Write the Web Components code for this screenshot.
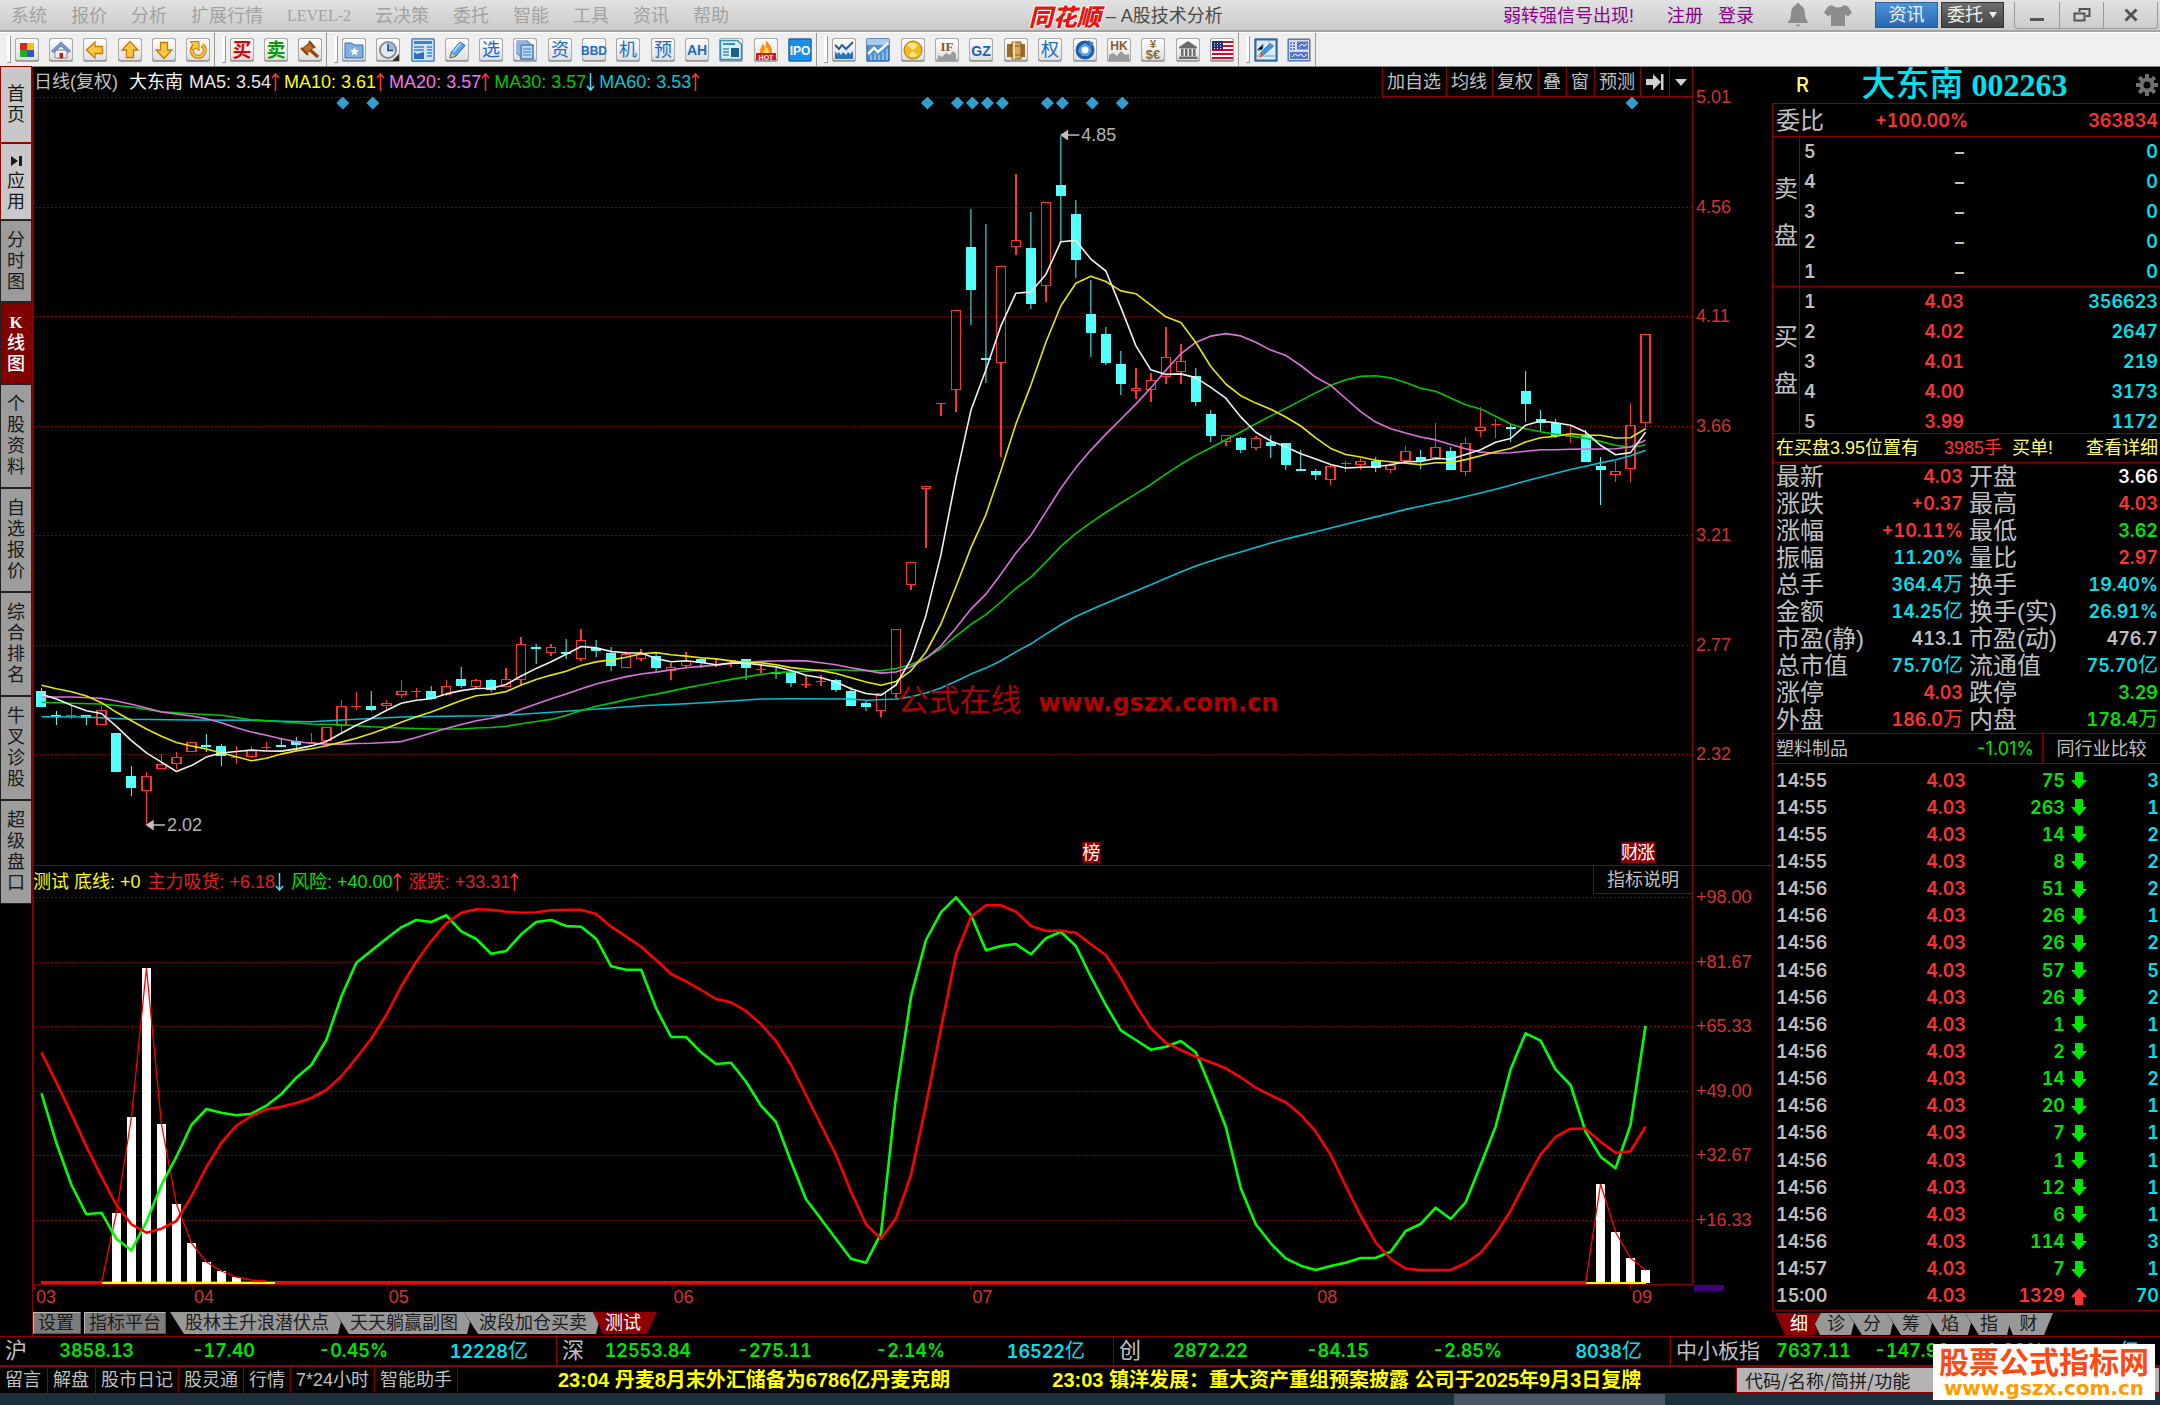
<!DOCTYPE html>
<html lang="zh-CN">
<head>
<meta charset="utf-8">
<title>A股技术分析</title>
<style>
  :root{
    --ui:"Liberation Sans","Noto Sans CJK SC",sans-serif;
    --num:Inter,"Noto Sans CJK SC",sans-serif;
    --line:#8c0000; --gray:#c0c0c0; --red:#ff3232; --green:#00e600; --cyan:#00e1f0; --yellow:#ffff00;
  }
  body{margin:0;background:#000;color:var(--gray);font:18px/24px var(--ui)}
</style>
</head>
<body>
<stock-app></stock-app>
<script>
const COMMON = `
  *{box-sizing:border-box}
  :host{display:block}
  button,a,input{font:inherit;color:inherit;text-decoration:none;border:0;padding:0;margin:0;background:none;border-radius:0;white-space:nowrap}
  .r{color:var(--red)} .g{color:var(--green)} .c{color:var(--cyan)} .w{color:#fff} .s{color:var(--gray)}
`;
class Base extends HTMLElement{
  constructor(){
    super();
    this.attachShadow({mode:'open'}).innerHTML = `<style>${COMMON}${this.css()}</style>${this.html()}`;
  }
  css(){return ''}
  html(){return '<slot></slot>'}
}
const def = (name, css, html) => customElements.define(name, class extends Base{
  css(){return css} html(){return typeof html === 'function' ? html() : html}
});

/* ---------- title bar ---------- */
def('title-bar', `
  :host{display:flex;align-items:center;height:32px;background:linear-gradient(#e2e2e2,#cbcbcb);border-bottom:2px solid #a4a4a4;color:#a2a2a2}
  nav{display:flex;gap:24px;padding:2px 0 0 11px;flex:1.086 1 0}
  .lv{font-family:"Liberation Serif",serif;font-size:16px}
  h1{margin:0;padding-top:2px;font:inherit;display:flex;align-items:center;gap:5px;color:#4a4a4a}
  h1 b{font:italic 900 24px/28px "Noto Sans CJK SC",sans-serif;color:#e01818;text-shadow:1px 0 #fff,-1px 0 #fff,0 1px #fff,0 -1px #fff}
  .right{flex:1 1 0;display:flex;justify-content:flex-end;align-items:center;color:#8b008b}
  .right>a{margin:2px 15px 0 0}
  .right>a.hot{margin-right:33px}
  .right>svg{margin:0 2px 0 11px}
  .right>a+svg{margin-left:17px}
  .b{height:26px;width:63px;color:#eee;margin-left:3px;border:1px solid #2d5f94;background:linear-gradient(#4a94da,#2868ae)}
  .b.k{background:linear-gradient(#6e6e6e,#444);border-color:#333}
  .win{display:flex;margin:0 2px 0 10px;border:1px solid #999;border-top:0;border-radius:0 0 4px 4px}
  .win button{width:44px;height:26px;display:grid;place-items:center;border-left:1px solid #999}
  .win button:first-child{border-left:0}.win button:last-child{width:54px}
`, `
  <nav>${['系统','报价','分析','扩展行情'].map(t=>`<button>${t}</button>`).join('')}<button class="lv">LEVEL-2</button>${['云决策','委托','智能','工具','资讯','帮助'].map(t=>`<button>${t}</button>`).join('')}</nav>
  <h1><b>同花顺</b><span>–</span><span>A股技术分析</span></h1>
  <div class="right">
    <a class="hot" href="#">弱转强信号出现!</a><a href="#">注册</a><a href="#">登录</a>
    <svg width="24" height="26" viewBox="0 0 24 26"><path d="M12 1c1.4 0 2 1 2 2 3.500 1.300 4.800 4.600 5 9 .1 4 1.500 6.500 3.500 9h-21C3.500 18.500 4.900 16 5 12c.2-4.400 1.500-7.700 5-9 0-1 .6-2 2-2zM9.500 22.500h5L12 25z" fill="#8c8c8c"/></svg>
    <svg width="30" height="26" viewBox="0 0 30 26"><path d="M9 3c2 3.200 10 3.200 12 0l4 1.500 4 6-4 4-3-2V24H8V12.500l-3 2-4-4 4-6z" fill="#8c8c8c"/></svg>
    <button class="b" style="margin-left:20px">资讯</button>
    <button class="b k">委托 <svg width="10" height="12" viewBox="0 0 10 12"><path d="M1 3h8L5 9z" fill="#eee"/></svg></button>
    <div class="win">
      <button aria-label="最小化"><svg width="16" height="16"><path d="M1 11h14v3H1z" fill="#555"/></svg></button>
      <button aria-label="还原"><svg width="18" height="16"><path d="M6.500 5V2h10v7H13M1.500 6.500h10v7h-10z" fill="none" stroke="#555" stroke-width="2"/></svg></button>
      <button aria-label="关闭"><svg width="16" height="14"><path d="M2.500 1.500l11 11M13.500 1.500l-11 11" stroke="#555" stroke-width="3"/></svg></button>
    </div>
  </div>`);

/* ---------- toolbar ---------- */
const T = (t,size,fill,y=17,font='Noto Sans CJK SC',w=400) =>
  `<text x="12" y="${y}" text-anchor="middle" font-family="${font},sans-serif" font-size="${size}" font-weight="${w}" fill="${fill}">${t}</text>`;
const ar = rot => `<path transform="rotate(${rot} 12 12)" d="M3.500 12L12 4V8.500h7.500v7H12V20z" fill="#ffc83c" stroke="#c47a10" stroke-width="1.300"/>`;
const N = 'Liberation Sans Narrow';
const ICONS = {
  grid:`<path d="M5 5h7v7H5z" fill="#d22"/><path d="M12 5h7v7h-7z" fill="#e8c800"/><path d="M5 12h7v7H5z" fill="#2a2"/><path d="M12 12h7v7h-7z" fill="#35c"/>`,
  home:`<path d="M6 12h12v8H6z" fill="#eee" stroke="#888"/><path d="M2.500 13L12 4l9.500 9-2 1.500L12 8l-7.500 6.500z" fill="#7d9ad8" stroke="#3c5a98" stroke-width=".7"/><path d="M10.500 15h3.500v5.500h-3.500z" fill="#b22"/>`,
  left:ar(0), up:ar(90), down:ar(-90),
  undo:`<path d="M7 8.500a6.500 6.500 0 1 0 9-1.500" fill="none" stroke="#c47a10" stroke-width="4"/><path d="M7 8.500a6.500 6.500 0 1 0 9-1.500" fill="none" stroke="#ffc83c" stroke-width="2"/><path d="M4 3.500h9V13l-3-3-3 2-2-2 2-3z" fill="#ffc83c" stroke="#c47a10"/>`,
  buy:T('买',19,'#e00000',19,'Noto Sans CJK SC',700), sell:T('卖',19,'#0a9a0a',19,'Noto Sans CJK SC',700),
  hammer:`<path d="M11 11l9 8" stroke="#9a4a10" stroke-width="3.500"/><path d="M4 11l8-7 4 5-8 7z" fill="#c06c28" stroke="#7c3a0c"/><path d="M3 10l7 7M11 3l6 7" stroke="#8a4410" stroke-width="2"/>`,
  star:`<path d="M3 5h7l2 2h9v13H3z" fill="#7fb0e4" stroke="#3a70b4"/><path d="M12.500 9l1.300 3 3.200.2-2.500 2 .9 3.300-2.900-1.800-2.900 1.800.9-3.300-2.500-2 3.200-.2z" fill="#fff"/>`,
  clock:`<circle cx="12" cy="12" r="8" fill="#dfe9f6" stroke="#8a8a8a" stroke-width="2"/><path d="M12 4.500v8h6.500A7 7 0 0 0 12 4.500z" fill="#9db6e8"/><path d="M12 6v6.500h5" stroke="#246" fill="none" stroke-width="1.500"/><path d="M23 16v7h-7z" fill="#333"/>`,
  panel:`<path d="M1 1h22v22H1z" fill="#cfe2f8" stroke="#2f6fb8"/><path d="M3 3h18v3H3z" fill="#3b82d0"/><path d="M3 9h10M3 12h10M16 9h5M16 12h5M16 15h5M16 18h5" stroke="#3b82d0" stroke-width="1.500"/><path d="M3 21v-7l3 2 3-1 4-1v7z" fill="#2c6fc0"/>`,
  pen:`<path d="M5 20l1.500-6L15 4l5 3.500L11 18z" fill="#58a8ea" stroke="#1c62a8"/><path d="M8 14l8-9" stroke="#bfe0ff" stroke-width="1.500"/><path d="M5 20l1.500-5.500L11 18z" fill="#f0c080" stroke="#555" stroke-width=".6"/>`,
  xuan:T('选',18,'#1d6bc4',18), zi:T('资',18,'#1d6bc4',18), ji:T('机',18,'#1d6bc4',18), yu:T('预',18,'#1d6bc4',18), quan:T('权',18,'#1d6bc4',18),
  docs:`<path d="M4 3h11v13H4z" fill="#eaf2fc" stroke="#3f78bc"/><path d="M6 5h11v13H6z" fill="#eaf2fc" stroke="#3f78bc"/><path d="M8 7h12v14H8z" fill="#bcd6f4" stroke="#3f78bc" stroke-width="1.500"/><path d="M10 11h8M10 14h8M10 17h8" stroke="#3f78bc"/>`,
  bbd:T('BBD',12,'#1d6bc4',16.5,N,700), ah:T('AH',14,'#1d6bc4',17,N,700),
  sheet:`<path d="M1.500 2.500h17l4 4v15h-21z" fill="#d9effa" stroke="#3a90b8" stroke-width="1.500"/><path d="M4 6h12" stroke="#3a90b8" stroke-width="2"/><path d="M4 11h6M4 14h6M4 17h6" stroke="#3a90b8" stroke-width="1.500"/><path d="M12 10h8v9h-8z" fill="#1e5f8c"/>`,
  hot:`<path d="M12 1c1 4 6 6 6 12v3H6v-3c0-3 2-4 2-7 2 1 2.500 2 2.500 3.500C12 7 12.500 4 12 1z" fill="#ff8c1a"/><path d="M12 8c.5 2 3 3 3 7H9c0-3 2.500-4 3-7z" fill="#ffe04a"/><path d="M2 15h20v7H2z" fill="#d81818"/>${T('HOT',7,'#fff',21.5,'Liberation Sans',700)}`,
  ipo:`<path d="M1 1h22v22H1z" fill="#1d8fe8" stroke="#0e5ca6"/>${T('IPO',12,'#fff',16.5,N,700)}`,
  wave:`<path d="M3 7l4 4 3-4 4 4 3-3 4-4" fill="none" stroke="#1f5f9e" stroke-width="2"/><path d="M3 21v-8l2 3 2-2 2 3 2-3 3 3 2-3 2 2 3-3v8z" fill="#2d74ba"/>`,
  trend:`<path d="M1 1h22v22H1z" fill="#4f8fd4" stroke="#3468a4"/><path d="M1 1h22v6H1z" fill="#a8cbf0"/><path d="M2 16l6-6 4 4 10-9" fill="none" stroke="#fff" stroke-width="2.500"/><path d="M5 22v-5M9 22v-7M13 22v-5M17 22v-8M21 22v-11" stroke="#cfe2f8"/>`,
  coin:`<circle cx="12" cy="12" r="9" fill="#f0b820" stroke="#a87810"/><path d="M6 7a9 9 0 0 1 11 0l-5 5zM17 17a9 9 0 0 1-9 1l3-5z" fill="#ffe88a"/>`,
  ifx:`<path d="M3 23v-6l4 2 4-4 4 2 3-4 3 3v7z" fill="#9c9c9c"/>${T('IF',13,'#8a5a30',12.5,'Liberation Serif',700)}`,
  gz:T('GZ',14,'#1a5fc0',17.5,'Liberation Sans',700),
  barrel:`<path d="M3 6h6v13H3zM15 6h6v13h-6z" fill="#9a6a2c"/><path d="M8 4h9v17H8z" fill="#d8aa58" stroke="#8a5c20"/><path d="M8 8h9M8 17h9" stroke="#8a5c20"/><path d="M10 4v17" stroke="#f5dca0" stroke-width="2"/>`,
  disc:`<circle cx="12" cy="12" r="9.500" fill="#1c5ea8"/><path d="M12 5l5 3.500 2 5-4 4.500H9l-4-4.500 2-5z" fill="#57a0e4"/><circle cx="12" cy="12" r="3.500" fill="#fff"/><path d="M15 2l6 3-4 4z" fill="#3a86d4"/>`,
  hk:`<path d="M2 23v-6l4-2 4 3 4-5 4 4 4-1v7z" fill="#9c9c9c"/>${T('HK',12,'#8a5a30',12,N,700)}`,
  money:T('¥',11,'#8a6a40',10,'Liberation Sans',700)+T('$€',13,'#8a6a40',21,'Liberation Sans',700),
  bank:`<path d="M12 3l9 6v1.500H3V9z" fill="#6c6c6c"/><path d="M5 11h2.500v7H5zM9 11h2.500v7H9zM13 11h2.500v7H13zM17 11h2.500v7H17zM3 18.500h18.500V21H3z" fill="#6c6c6c"/>`,
  us:`<path d="M2 3h21v18H2z" fill="#fff"/><path d="M2 4h21M2 8h21M2 12h21M2 16h21M2 20h21" stroke="#c8102e" stroke-width="2.200"/><path d="M2 3h11v9H2z" fill="#1e2f78"/><path d="M4 5.500h8M4 8h8M4 10.500h8" stroke="#fff" stroke-dasharray="1 2"/>`,
  edit:`<path d="M1.500 1.500h21v21h-21z" fill="#dcebfa" stroke="#3468a4" stroke-width="2"/><path d="M3 12h6V6M3 18h18M15 3v4" stroke="#5a92d4"/><path d="M5 20l1-6L16 4l5 4L10 18z" fill="#4a94dc" stroke="#fff"/><path d="M5 20l1-6 4 4z" fill="#e06a3a"/>`,
  table:`<path d="M1.500 1.500h21v21h-21z" fill="#d3def6" stroke="#5a78c8"/><path d="M3 5h5M3 8h5M3 11h5" stroke="#4a68c0" stroke-width="1.500" stroke-dasharray="2 1"/><path d="M10 3.500h11v8H10zM3 14h18v7H3z" fill="#5878d0"/><path d="M12 9l3-3 2 2 3-2M5 19l3-3 3 2 3-2 3 3 3-3" fill="none" stroke="#fff"/>`
};
const GROUPS = [
  [215,['grid','home','left','up','down','undo']],
  [112,['buy','sell','hammer']],
  [490,['star','clock','panel','pen','xuan','docs','zi','bbd','ji','yu','ah','sheet','hot','ipo']],
  [422,['wave','trend','coin','ifx','gz','barrel','quan','disc','hk','money','bank','us']],
  [77,['edit','table']]
];
def('tool-bar', `
  :host{display:flex;height:35px;background:#efefef;border-top:1px solid #fff;border-bottom:1px solid #888}
  .grp{display:flex;justify-content:space-between;align-items:center;padding:0 4px 0 15px;border-right:1px solid #999;position:relative}
  .grp::before{content:"";position:absolute;left:7px;top:3px;bottom:3px;width:3px;border-right:1px solid #999;border-bottom:1px solid #999;background:#fff}
  button{width:24px;height:24px;border-radius:3px;background:linear-gradient(#fff,#dcdcdc);box-shadow:inset 0 0 0 1px #aaa,inset 0 -1px 0 1px #999}
  svg{display:block;overflow:visible}
`, GROUPS.map(([w,l])=>`<div class="grp" style="width:${w}px">${l.map(k=>`<button aria-label="${k}"><svg width="24" height="24" viewBox="0 0 24 24">${ICONS[k]}</svg></button>`).join('')}</div>`).join(''));

/* ---------- side navigation ---------- */
def('side-nav', `
  :host{width:33px;flex:none;border-right:1px solid var(--line)}
  nav{display:flex;flex-direction:column;padding-left:1px;gap:2px}
  button{width:30px;height:102px;display:flex;flex-direction:column;justify-content:center;align-items:center;background:#9c9c9c;color:#1a1a1a;line-height:21px;outline:1px solid #222}
  .t{height:80px}
  .top{height:75px;background:#c8c8c8;outline:1px solid #900}
  .on{background:#800000;color:#fff;font-weight:500}
  .on i{font:700 17px/21px "Liberation Serif",serif}
  span{display:block}
`, () => `<nav>${[['top','首页'],['top','▸应用'],['t','分时图'],['t on','K线图'],['','个股资料'],['','自选报价'],['','综合排名'],['','牛叉诊股'],['','超级盘口']]
  .map(([c,t])=>`<button class="${c}">${[...t].map(x=>x==='▸'?'<svg width="14" height="20"><path d="M2 5l7 5-7 5zM10 5h3v10h-3z" fill="#1a1a1a"/></svg>':x==='K'?'<i>K</i>':`<span>${x}</span>`).join('')}</button>`).join('')}</nav>`);

/* ---------- chart data ---------- */
const X = i => 41.5 + 15*i;
// [colour, high, low, body top, body bottom]; two vertical scales
const A = y => 560 + y/3, B = y => 100 + y/2.529;
const D1 = `c384,442,392,441 c452,495,465,470 r437,477,466,468 c465,495,465,474 r437,495,451,494 c518,635,518,635 c617,707,649,684 r635,795,649,692 r582,627,613,626 r576,626,591,611 r547,575,547,575 c522,577,554,557 c553,617,559,587 r559,612,591,594 r558,593,569,590 r545,573,561,567 c533,558,554,558 c532,571,544,554 r518,553,547,549 r502,560,502,543 r419,521,438,498 r397,450,438,440 c392,452,437,451 r419,451,428,437 r360,414,393,404 r383,414,393,395 c378,416,392,416 r361,409,379,405 c320,383,356,378 r356,386,361,382 c356,395,360,391 r325,380,357,380 r230,374,253,360 c253,311,261,264 r253,287,262,278 c238,297,276,279 r208,302,240,297 c239,290,264,273 c262,333,278,318 r277,324,283,323 r266,302,281,297 c280,333,289,324 r308,360,321,332 r277,321,302,318 c290,324,297,309 r297,321,315,317 r300,320,300,303 c298,360,298,324 r316,338,326,332 c323,356,335,339 c336,382,337,369 r345,383,371,373 r345,378,362,367 c356,395,360,391 c380,437,392,437 c421,452,429,441 r398,472,398,454 r208,414,208,403 r7,90,7,76`;
const D2 = `r975,1133,975,983 r767,798,767,768 r532,788,532,733 c276,568,371,480 c314,716,652,657 r421,902,421,664 r188,393,353,373 c283,529,375,516 r258,511,258,471 c90,360,216,244 c253,450,288,404 c454,651,542,590 c573,669,591,666 c636,745,667,718 r679,756,728,737 r690,765,709,734 r573,718,649,700 r617,718,660,687 c679,775,697,764 c785,864,795,851 r847,875,847,865 c853,893,856,885 r850,886,854,881 c847,905,864,875 c868,936,868,924 c886,935,932,936 c933,962,937,949 r922,974,925,962 r913,942,919,921 r906,935,914,923 c902,942,912,930 r917,943,924,935 r876,916,888,914 c886,932,903,914 r818,905,877,905 c877,936,888,936 r853,950,868,942 r776,852,828,836 r806,856,819,823 c820,866,826,829 c685,814,735,768 c785,838,808,816 c808,854,817,850 r822,867,849,852 c835,916,849,916 c902,1023,926,935 r913,966,937,949 r766,966,821,934 r592,835,592,817`;
const parse = (s,f) => s.split(' ').map(t=>[t[0],...t.slice(1).split(',').map(v=>f(+v))]);
const K = [...parse(D1,A),...parse(D2,B)];
const close = K.map(k => k[0]==='c' ? k[4] : k[3]);
const SEED = {
  5:[[0,403],[1,417],[2,436],[3,452]],
  10:[[0,376],[1,386],[2,395],[3,408],[4,428],[5,457],[6,482],[7,507],[8,529]],
  20:[[0,411],[2,411],[4,415],[5,423],[6,433],[7,444],[8,456],[10,468],[11,476],[12,488],[13,503],[14,516],[15,526],[16,536],[17,545],[18,550]],
  30:[[0,427],[2,430],[4,432],[6,441],[8,455],[10,461],[12,466],[14,479],[16,485],[18,492],[20,494],[22,500],[24,504],[26,507],[28,507]],
  60:[[0,470],[3,471],[6,478],[10,480],[14,481],[16,484],[18,485],[20,480],[24,471],[28,468],[30,467],[32,463],[35,454],[38,444],[40,437],[43,431],[46,423],[48,417],[50,416],[54,417],[55,421],[57,417],[58,410]]
};
const ma = n => {
  const p = SEED[n].map(([i,y])=>[X(i),A(y)]);
  for(let i=n-1;i<close.length;i++) p.push([X(i), close.slice(i-n+1,i+1).reduce((a,b)=>a+b)/n]);
  return p.map(q=>q[0]+','+q[1].toFixed(1)).join(' ');
};
const candle = ([c,h,l,t,b],i) => {
  const x = X(i); [h,l,t,b] = [h,l,t,b].map(Math.round);
  if(c==='c') return `<path d="M${x} ${h}V${l}" stroke="#54ffff" stroke-width="1"/><path d="M${x-5} ${t}h10v${Math.max(2,b-t)}h-10z" fill="#54ffff"/>`;
  if(b-t<3) return `<path d="M${x} ${h}V${l}M${x-5} ${t+.5}h10" stroke="#ff3232" stroke-width="1.500"/>`;
  return `<path d="M${x} ${h}V${t}M${x} ${b}V${l}M${x-4.5} ${t+.5}h9v${b-t-1}h-9z" fill="none" stroke="#ff3232" stroke-width="1.500"/>`;
};
const gridLines = (y0,step,n) => Array.from({length:n},(_,k)=>`<path d="M35 ${Math.round(y0+k*step)+.5}H1693" stroke="#8c0000" stroke-dasharray="2 2"/>`).join('');
const up = '<svg class="a" width="9" height="20"><path d="M4.500 19V2M1 6l3.500-4L8 6" fill="none" stroke="#ff3232" stroke-width="1.500"/></svg>';
const dn = '<svg class="a" width="9" height="20"><path d="M4.500 1v17M1 14l3.500 4L8 14" fill="none" stroke="#54d8ff" stroke-width="1.500"/></svg>';
const PANE = `
  :host{display:flex}
  .plot{flex:1;min-width:0}
  header{display:flex;height:30px;border-right:1px solid var(--line);justify-content:space-between}
  .lg{display:flex;align-items:center;gap:4px;white-space:nowrap;padding-left:1px}
  .a{vertical-align:-4px}
  .chart{display:block;width:100%}
  .axis{width:79px;flex:none;color:#d63030;padding-left:3px}
  .axis div{display:flex;flex-direction:column;justify-content:space-between}
  svg text{font-family:"Liberation Sans","Noto Sans CJK SC",sans-serif}
`;

def('price-chart', PANE+`
  :host{border-bottom:1px solid var(--line)}
  .axis div{padding-top:18px;height:699px}
  .btns{display:flex}
  .btns button{height:30px;border-left:1px solid var(--line);border-bottom:1px solid var(--line);padding:0 5px 0 4px;display:flex;align-items:center;justify-content:center}
`, () => `
  <div class="plot">
    <header>
      <div class="lg"><span>日线(复权)</span><span class="w" style="margin:0 2px 0 7px">大东南</span>
        <span style="color:#e8e8e8">MA5: 3.54${up}</span><span style="color:#ffff00">MA10: 3.61${up}</span><span style="color:#f078f0">MA20: 3.57${up}</span><span style="color:#00c800">MA30: 3.57${dn}</span><span style="color:#00c8dc">MA60: 3.53${up}</span></div>
      <div class="btns">${['加自选','均线','复权','叠','窗','预测'].map(t=>`<button>${t}</button>`).join('')}<button aria-label="右移" style="width:29px"><svg width="20" height="20"><path d="M1 7h7V2l8 8-8 8v-5H1zM16 2h2.500v16H16z" fill="#d0d0d0"/></svg></button><button aria-label="更多" style="width:23px"><svg width="12" height="10"><path d="M0 2h12L6 9z" fill="#d0d0d0"/></svg></button></div>
    </header>
    <svg class="chart" height="768" viewBox="33 97 1661 768" preserveAspectRatio="none">
      <g shape-rendering="crispEdges">${gridLines(97,109.5,7)}<path d="M33.500 97V865M1693.500 97V865" stroke="#8c0000"/></g>
      ${[20,22,59,61,62,63,64,67,68,70,72,106].map(i=>`<path d="M${X(i)+1.5} 96.500l6.500 6.500-6.500 6.500-6.500-6.500z" fill="#2f9fd0"/>`).join('')}
      <g shape-rendering="crispEdges">${K.map(candle).join('')}</g>
      <g fill="none" stroke-width="1.600" stroke-linejoin="round">
        <polyline points="${ma(60)}" stroke="#00c0d8"/><polyline points="${ma(30)}" stroke="#00c800"/>
        <polyline points="${ma(20)}" stroke="#e070e0"/><polyline points="${ma(10)}" stroke="#e8e800"/><polyline points="${ma(5)}" stroke="#f0f0f0"/>
      </g>
      <g fill="#c0c0c0" stroke="#c0c0c0" stroke-width="1.500"><path d="M1062 135h18M1068 131l-6 4 6 4zM147 825h18M153 821l-6 4 6 4z"/></g>
      <g fill="#b4b4b4" font-size="18"><text x="1082" y="141">4.85</text><text x="167" y="831">2.02</text></g>
      <text x="898" y="711" font-size="31" fill="#b00000">公式在线</text>
      <text x="1039" y="711" font-size="24" fill="#b00000" font-weight="700" style="font-family:'DejaVu Sans',sans-serif">www.gszx.com.cn</text>
      ${[['榜',1092],['财',1631],['涨',1647]].map(([t,x])=>`<path d="M${x-9} 842h18v21h-18z" fill="#8c0000"/><text x="${x}" y="859" font-size="18" fill="#fff" text-anchor="middle">${t}</text>`).join('')}
    </svg>
  </div>
  <div class="axis"><div>${['5.01','4.56','4.11','3.66','3.21','2.77','2.32'].map(t=>`<span>${t}</span>`).join('')}</div></div>`);

const G1=[700,850,975,1063,1058,1137,1171,1085,975,890,795,747,758,766,761,737,702,653,615,540,410,308,272,236,202,180,186,166,214,237,281,273,223,186,180,198,200,236,319,329,329,445,531,531,577,612,608,665,737,786,905,1018,1077,1137,1196,1208];
const G2=[1210,800,500,330,247,202,255,361,348,342,373,325,305,348,440,525,601,630,659,650,633,667,775,890,1075,1183,1240,1285,1307,1320,1308,1298,1284,1283,1265,1203,1182,1133,1167,1117,1005,890,718,610,632,718,765,905,980,1015,885,587];
const R1=[577,668,762,860,950,1035,1093,1118,1106,1083,1009,921,848,797,768,748,740,729,714,690,649,594,536,465,379,305,243,190,158,148,149,155,158,157,151,149,149,162,200,230,260,300,342,364,390,417,427,453,493,543,615,705,795,885,995,1093];
const R2=[1226,1165,1035,825,595,375,260,226,226,245,288,302,302,308,343,375,445,525,595,638,660,680,697,715,742,773,796,817,854,905,975,1068,1158,1237,1287,1316,1320,1320,1320,1300,1268,1213,1142,1055,973,921,896,896,935,968,964,890];
const series = (a,b) => [...a.map(y=>860+y/3),...b.map(y=>830+y/3)].map((y,i)=>X(i)+','+y.toFixed(1)).join(' ');
const BARS = [[5,1213],[6,1117],[7,968],[8,1124],[9,1204],[10,1243],[11,1262],[12,1271],[13,1277],[104,1184],[105,1232],[106,1258],[107,1270]];

def('indicator-chart', PANE+`
  .axis div{padding-top:19px;height:366px}
  .axis i{display:block;width:30px;height:6px;background:#400080;margin:53px 0 0 -2px}
  header button{width:99px;height:28px;border-left:1px solid var(--line);border-bottom:1px solid var(--line);padding-right:0}
  .lg{padding:2px 0 0;gap:7px;color:#e02020}
`, () => `
  <div class="plot">
    <header><div class="lg"><span style="color:#ffff00">测试 底线: +0</span><span>主力吸货: +6.18${dn}</span><span style="color:#00e600">风险: +40.00${up}</span><span>涨跌: +33.31${up}</span></div><button>指标说明</button></header>
    <svg class="chart" height="415" viewBox="33 896 1661 415" preserveAspectRatio="none">
      <g shape-rendering="crispEdges">${gridLines(897,64.5,6)}<path d="M33.500 896V1290M1693.500 896V1284M33 1284.500H1694" stroke="#8c0000"/>
      <path d="M41 1282.500H1587" stroke="#f00" stroke-width="3"/>
      ${BARS.map(([i,y])=>`<path d="M${X(i)-4.5} ${y}h9V1283h-9z" fill="#fff"/>`).join('')}
      <path d="M102 1283H275M1587 1283H1647" stroke="#ffff00" stroke-width="2"/></g>
      <g fill="none" stroke="#f00" stroke-width="1.300">
        <polyline points="${X(4)},1283 ${BARS.slice(0,9).map(([i,y])=>X(i)+','+y).join(' ')} ${X(14)},1280 ${X(15)},1281"/>
        <polyline points="${X(103)},1283 ${BARS.slice(9).map(([i,y])=>X(i)+','+y).join(' ')}"/></g>
      <g fill="none" stroke-width="2.600" stroke-linejoin="round"><polyline points="${series(G1,G2)}" stroke="#0f0"/><polyline points="${series(R1,R2)}" stroke="#f00"/></g>
      ${[['03',34],['04',192],['05',387],['06',672],['07',971],['08',1316],['09',1631]].map(([t,x])=>`<path d="M${x+.5} 1284v6" stroke="#8c0000"/><text x="${x+2}" y="1303" font-size="18" fill="#d63030">${t}</text>`).join('')}
    </svg>
  </div>
  <div class="axis"><div>${['+98.00','+81.67','+65.33','+49.00','+32.67','+16.33'].map(t=>`<span>${t}</span>`).join('')}</div><i></i></div>`);

/* ---------- slanted tabs ---------- */
const TABS = `
  :host{display:flex;height:25px;padding-top:1px;color:#1c1c1c}
  button{height:22px;line-height:22px;background:#989898}
  .tab{padding:0 12px 0 15px;margin-right:-6px;clip-path:polygon(0 0,calc(100% - 6px) 0,100% 45%,calc(100% - 3px) 100%,14px 100%)}
  .on{background:#8c0000;color:#fff;clip-path:polygon(0 0,100% 0,calc(100% - 10px) 100%,10px 100%)}
`;
def('chart-tabs', TABS+`
  .btn{border:1px solid #b8b8b8;border-right-color:#555;border-bottom-color:#555;padding:0 6px 0 4px;line-height:20px;margin-right:3px;background:#7c7c7c}
  .btn+.btn{margin-right:4px;padding:0 4px}
  .on{padding:0 16px 0 12px}
`, `<button class="btn">设置</button><button class="btn">指标平台</button><button class="tab">股林主升浪潜伏点</button><button class="tab">天天躺赢副图</button><button class="tab">波段加仓买卖</button><button class="tab on">测试</button>`);
def('quote-tabs', TABS+`
  :host{padding:2px 0 0 3px;height:25px}
  .tab{width:45px;padding:0 0 0 3px}
  .on{width:50px;margin-right:-12px;padding:0 2px 0 0}
  .nx{clip-path:polygon(6px 0,calc(100% - 6px) 0,100% 45%,calc(100% - 3px) 100%,5px 100%,0 50%);margin-left:2px;width:39px}
  .end{width:49px;padding:0;clip-path:polygon(0 0,100% 0,calc(100% - 9px) 100%,9px 100%)}
`, `<button class="tab on">细</button><button class="tab nx">诊</button>${['分','筹','焰','指'].map(t=>`<button class="tab">${t}</button>`).join('')}<button class="tab end">财</button>`);

/* ---------- quote panel ---------- */
const TBL = `
  table{border-collapse:collapse;width:100%;table-layout:fixed}
  td,th{padding:0;text-align:right;white-space:nowrap;font-weight:inherit}
  .n{font:600 18px/24px var(--num);font-variant-numeric:tabular-nums}
  u{text-decoration:none;font:400 20px/24px var(--ui)}
`;
def('order-book', TBL+`
  :host{border-top:1px solid var(--line);font-size:24px}
  .wb{display:flex;height:32px;align-items:center;padding:2px 2px 0 3px}
  .wb b{width:144px;text-align:right}.wb b+b{flex:1}
  .blk{display:flex;border-top:1px solid var(--line);height:150px}
  .blk+.blk{height:147px}
  .side{width:27px;border-right:1px solid var(--line);display:flex;flex-direction:column;justify-content:center;line-height:47px;padding-left:1px}
  .tw{flex:1}
  tr{height:30px} td{height:30px}
  td:first-child{width:24px;text-align:left;padding-left:4px} td:nth-child(2){width:140px} td:last-child{padding-right:2px}
`, () => {
  const rows = (a) => a.map(([n,p,q])=>`<tr><td class="s">${n}</td><td class="${p==='–'?'s':'r'}">${p}</td><td class="c">${q}</td></tr>`).join('');
  return `<div class="wb"><span>委比</span><b class="n r">+100.00%</b><b class="n r">363834</b></div>
  <div class="blk"><div class="side"><span>卖</span><span>盘</span></div><div class="tw"><table class="n">${rows([5,4,3,2,1].map(n=>[n,'–',0]))}</table></div></div>
  <div class="blk"><div class="side"><span>买</span><span>盘</span></div><div class="tw"><table class="n">${rows([[1,'4.03',356623],[2,'4.02',2647],[3,'4.01',219],[4,'4.00',3173],[5,'3.99',1172]])}</table></div></div>`;
});
def('quote-stats', TBL+`
  :host{border-top:1px solid var(--line)}
  th{text-align:left;font:400 24px/27px var(--ui);height:27px} td{height:27px}
  th:first-child{padding-left:3px;width:75px} td:nth-child(2){width:115px} th:nth-child(3){padding-left:6px;width:100px} td:last-child{padding-right:2px}
`, () => `<table>${[
  ['最新','r','4.03','开盘','w','3.66'],['涨跌','r','+0.37','最高','r','4.03'],['涨幅','r','+10.11%','最低','g','3.62'],['振幅','c','11.20%','量比','r','2.97'],
  ['总手','c','364.4万','换手','c','19.40%'],['金额','c','14.25亿','换手(实)','c','26.91%'],['市盈(静)','s','413.1','市盈(动)','s','476.7'],
  ['总市值','c','75.70亿','流通值','c','75.70亿'],['涨停','r','4.03','跌停','g','3.29'],['外盘','r','186.0万','内盘','g','178.4万']
].map(r=>{const v=s=>s.replace(/[万亿]/,m=>`<u>${m}</u>`);return `<tr><th>${r[0]}</th><td class="n ${r[1]}">${v(r[2])}</td><th>${r[3]}</th><td class="n ${r[4]}">${v(r[5])}</td></tr>`}).join('')}</table>`);
def('trade-ticks', TBL+`
  :host{border-top:1px solid var(--line);border-bottom:1px solid var(--line);padding-top:3px}
  table{height:543px}
  td:nth-child(1){text-align:left;padding-left:3px;width:70px} td:nth-child(2){width:123px} td:nth-child(3){width:99px} td:nth-child(4){width:28px;text-align:left;padding-left:6px} td:last-child{padding-right:1px}
  svg{display:block}
`, () => `<table class="n">${[['14:55',75,3],['14:55',263,1],['14:55',14,2],['14:55',8,2],['14:56',51,2],['14:56',26,1],['14:56',26,2],['14:56',57,5],['14:56',26,2],['14:56',1,1],['14:56',2,1],['14:56',14,2],['14:56',20,1],['14:56',7,1],['14:56',1,1],['14:56',12,1],['14:56',6,1],['14:56',114,3],['14:57',7,1],['15:00',1329,70]]
  .map(([t,v,n])=>{const u=v===1329;return `<tr><td class="s">${t}</td><td class="r">4.03</td><td class="${u?'r':'g'}">${v}</td><td><svg width="16" height="17"><path d="${u?'M8 0l8 9h-4v8H4V9H0z':'M8 17l8-9h-4V0H4v8H0z'}" fill="${u?'#ff3232':'#00e600'}"/></svg></td><td class="c">${n}</td></tr>`}).join('')}</table>`);
def('quote-panel', `
  :host{width:388px;flex:none;display:flex;flex-direction:column}
  .hd{height:36px;display:flex;align-items:center;padding:0 2px 0 24px;justify-content:space-between}
  .hd i{font:500 20px/24px Inter,sans-serif;color:#ffff66}
  .hd h2{margin:0 16px 0 0;font:700 32px/36px "Liberation Serif","Noto Sans CJK SC",serif;color:var(--cyan)}
  .hd h2 span{font-weight:500;font-size:34px}
  .bd{border-left:1px solid var(--line)}
  .row{display:flex;align-items:center;height:29px;border-top:1px solid var(--line);padding-left:3px}
  .note{color:#ffff66;padding-right:2px}
  .note .r{margin:0 10px 0 25px}
  .note a{margin-left:auto}
  .ind{height:30px}
  .ind span:nth-child(2){flex:1;text-align:right;padding-right:8px;font-family:var(--num)}
  .ind button{width:118px;height:29px;border-left:1px solid var(--line)}
`, `
  <div class="hd"><i>R</i><h2><span>大东南</span> 002263</h2>
    <svg width="22" height="22" viewBox="-11 -11 22 22"><g fill="#707070">${[0,45,90,135].map(a=>`<path transform="rotate(${a})" d="M-2-11h4v22h-4z"/>`).join('')}<circle r="7.500"/></g><circle r="3.500" fill="#000"/></svg></div>
  <div class="bd">
    <order-book></order-book>
    <div class="row note"><span>在买盘3.95位置有</span><span class="r">3985手</span><span>买单!</span><a href="#">查看详细</a></div>
    <quote-stats></quote-stats>
    <div class="row ind"><span>塑料制品</span><span class="g">-1.01%</span><button>同行业比较</button></div>
    <trade-ticks></trade-ticks>
    </div>
  <quote-tabs></quote-tabs>`);

/* ---------- index strip ---------- */
def('index-strip', TBL+`
  :host{display:flex;height:29px;border-top:1px solid var(--line)}
  section{display:flex;align-items:center;flex:none;width:557px;border-right:1px solid var(--line)}
  .nm{font-size:22px;width:36px;padding-left:5px}
  b{text-align:right}
  .v1{width:98px}.v2{width:121px}.v3{width:133px}.v4{width:140px}
  section:last-child{flex:1;border:0;overflow:hidden}
  section:last-child .nm{width:90px;font-size:21px}
  section:last-child .v1{width:90px}section:last-child .v2{width:98px}section:last-child .v3,section:last-child .v4{width:95px}
`, () => [['沪','3858.13','-17.40','-0.45%','12228'],['深','12553.84','-275.11','-2.14%','16522'],['创','2872.22','-84.15','-2.85%','8038'],['中小板指','7637.11','-147.96','-1.90%','1551']]
  .map(r=>`<section><span class="nm">${r[0]}</span><b class="n g v1">${r[1]}</b><b class="n g v2">${r[2]}</b><b class="n g v3">${r[3]}</b><b class="n c v4">${r[4]}<u>亿</u></b></section>`).join(''));

/* ---------- news bar ---------- */
def('news-bar', `
  :host{display:flex;height:29px;border-top:2px solid var(--line);border-bottom:1px solid var(--line)}
  nav{display:flex;width:558px}
  nav button{height:26px;padding:0 6px 0 5px;border-right:1px solid var(--line)}
  nav button:nth-child(n+3){padding-right:5px}
  .news{flex:1;display:flex;gap:102px;align-items:center;font-weight:700;font-size:20px;color:var(--yellow);white-space:nowrap}
  input{width:424px;background:#b4b4b4;color:#1a1a1a;padding:0 8px;border:1px solid #900;font-family:"Noto Sans CJK SC",sans-serif}
`, `<nav>${['留言','解盘','股市日记','股灵通','行情','7*24小时','智能助手'].map(t=>`<button>${t}</button>`).join('')}</nav>
  <div class="news"><a href="#">23:04 丹麦8月末外汇储备为6786亿丹麦克朗</a><a href="#">23:03 镇洋发展：重大资产重组预案披露 公司于2025年9月3日复牌</a></div>
  <input aria-label="搜索" value="代码/名称/简拼/功能">`);

/* ---------- corner watermark ---------- */
def('site-mark', `
  :host{position:absolute;right:5px;bottom:5px;width:222px;height:56px;background:#fff;text-align:center;white-space:nowrap}
  b{display:block;font:700 30px/33px "Noto Sans CJK SC",sans-serif;color:#ff4a14}
  a{display:block;font:700 20px/22px "DejaVu Sans",sans-serif;color:#ff9c00}
`, `<b>股票公式指标网</b><a href="#">www.gszx.com.cn</a>`);

def('stock-app', `
  :host{display:flex;flex-direction:column;min-height:100vh;position:relative;overflow:hidden}
  main{display:flex}
  .center{flex:1;min-width:0}
  .task{flex:1;min-height:11px;background:linear-gradient(90deg,#1e2f3c 0 67.3%,#4a5864 67.3% 77.1%,#1e2f3c 77.1%)}
`, `
  <title-bar></title-bar><tool-bar></tool-bar>
  <main><side-nav></side-nav><div class="center"><price-chart></price-chart><indicator-chart></indicator-chart><chart-tabs></chart-tabs></div><quote-panel></quote-panel></main>
  <index-strip></index-strip><news-bar></news-bar><div class="task"></div><site-mark></site-mark>`);
</script>
</body>
</html>
